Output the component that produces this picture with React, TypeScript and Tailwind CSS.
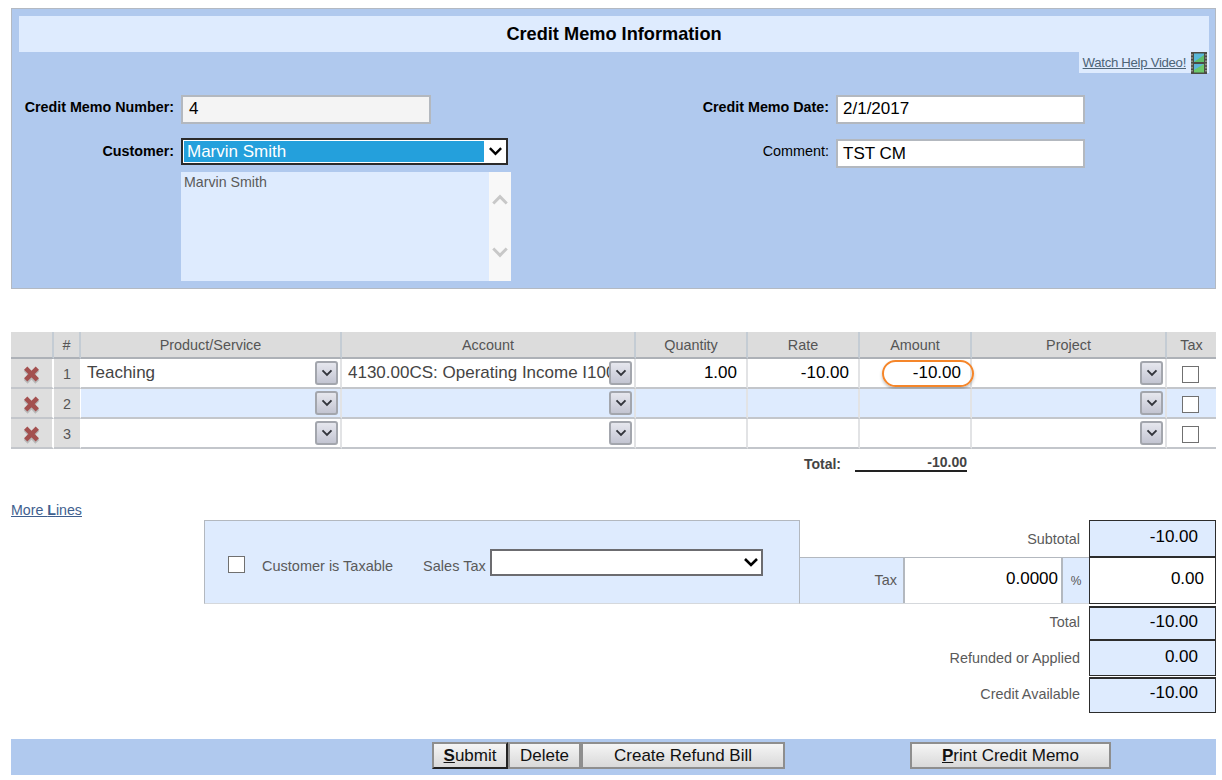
import React from "react";

const light = "bg-[#deebfe]";

function Chevron({ className = "" }: { className?: string }) {
  return (
    <svg viewBox="0 0 16 10" className={className} fill="none">
      <path d="M2 1.5 L8 7.5 L14 1.5" stroke="currentColor" strokeWidth="2.6" />
    </svg>
  );
}

function DropBtn() {
  return (
    <div className="flex h-[24px] w-[23px] items-center justify-center rounded-[3px] border-2 border-[#a3a6ad] bg-gradient-to-b from-[#e6e7ee] to-[#c3c5d2] text-[#33353c]">
      <Chevron className="h-[8px] w-[12px]" />
    </div>
  );
}

function CheckBox({ className = "" }: { className?: string }) {
  return <div className={"h-[17px] w-[17px] border border-[#707070] bg-white " + className} />;
}

function XIcon() {
  return (
    <svg viewBox="0 0 18 18" className="mt-[3px] h-[19px] w-[19px]">
      <path d="M3.5 3 L14.5 15 M14.5 3 L3.5 15" stroke="#8a8a8a" strokeOpacity="0.45" strokeWidth="5" transform="translate(0 1)" />
      <path d="M3.5 3 L14.5 14 M14.5 3 L3.5 14" stroke="#a3504f" strokeWidth="4.4" />
    </svg>
  );
}

function FilmIcon() {
  return (
    <svg viewBox="0 0 16 22" className="h-[22px] w-[16px]">
      <rect x="0" y="0" width="16" height="22" fill="#4c4c44" />
      <rect x="3" y="1.5" width="10" height="8.5" fill="#58b8d8" />
      <path d="M3 10 L13 3 V10 Z" fill="#5fbe6a" />
      <rect x="3" y="12" width="10" height="8.5" fill="#6cc86a" />
      <path d="M3 12 H13 L3 18 Z" fill="#5cb4d8" />
      <path d="M1 2 V20 M15 2 V20" stroke="#bdbdb0" strokeWidth="1.2" strokeDasharray="1.6 1.6" />
    </svg>
  );
}

function Field({ value, bg = "bg-white", className = "" }: { value: string; bg?: string; className?: string }) {
  return (
    <div className={"flex h-[29px] items-center border-2 border-[#b3b8bf] text-[17px] text-black " + bg + " " + className}>
      {value}
    </div>
  );
}

const Label = ({ children, className = "" }: { children: React.ReactNode; className?: string }) => (
  <div className={"text-right text-black " + className}>{children}</div>
);

const heads = ["", "#", "Product/Service", "Account", "Quantity", "Rate", "Amount", "Project", "Tax"];

function Row({ n, blue, product, account, qty, rate, amount }: { n: number; blue?: boolean; product?: string; account?: string; qty?: string; rate?: string; amount?: string }) {
  const bg = blue ? light : "bg-white";
  const cell = "h-[30px] border-b-2 border-b-[#c3c6cb] border-r-2 border-r-[#e2e3e5] " + bg;
  return (
    <>
      <div className="flex h-[30px] items-center justify-center border-b-2 border-r-2 border-b-[#c3c6cb] border-r-white bg-[#dedede]">
        <XIcon />
      </div>
      <div className="flex h-[30px] items-center justify-center border-b-2 border-r border-b-[#c3c6cb] border-r-white bg-[#dedede] pt-[3px] text-[14.4px] text-[#555]">
        {n}
      </div>
      <div className={cell + " flex items-center justify-between overflow-hidden pl-[6px] pr-[2px]"}>
        <span className="text-[17px] text-[#444]">{product}</span>
        <DropBtn />
      </div>
      <div className={cell + " relative flex items-center overflow-hidden pl-[6px]"}>
        <span className="whitespace-nowrap text-[17px] text-[#444]">{account}</span>
        <div className="absolute right-[2px] top-[2px]">
          <DropBtn />
        </div>
      </div>
      <div className={cell + " flex items-center justify-end pr-[9px] text-[17px] text-black"}>{qty}</div>
      <div className={cell + " flex items-center justify-end pr-[9px] text-[17px] text-black"}>{rate}</div>
      <div className={cell + " relative flex items-center justify-end pr-[9px] text-[17px] text-black"}>
        {amount}
        {amount && (
          <div className="absolute left-[22px] top-[1px] h-[27px] w-[92px] rounded-[14px] border-2 border-[#f5862a] shadow-[0_2px_3px_rgba(80,80,80,0.35)]" />
        )}
      </div>
      <div className={cell + " flex items-center justify-end pr-[2px]"}>
        <DropBtn />
      </div>
      <div className={"flex h-[30px] items-center justify-center border-b-2 border-b-[#c3c6cb] pr-[2px] pt-[2px] " + bg}>
        <CheckBox />
      </div>
    </>
  );
}

function TotalBox({ value, className = "" }: { value: string; className?: string }) {
  return (
    <div className={"flex w-[127px] items-start justify-end border border-[#2c2c2c] pr-[17px] text-[17px] text-black " + className}>
      {value}
    </div>
  );
}

function Btn({ children, className = "" }: { children: React.ReactNode; className?: string }) {
  return (
    <div className={"flex h-[27px] items-center justify-center border-2 border-[#8e8e8e] bg-gradient-to-b from-[#f5f5f5] to-[#d9d9d9] text-[17px] text-[#111] " + className}>
      {children}
    </div>
  );
}

export default function App() {
  return (
    <div className="h-[780px] w-[1222px] overflow-hidden bg-white pl-[11px] pt-[8px] font-['Liberation_Sans',Arial,sans-serif]">
      {/* Header panel */}
      <div className="h-[281px] w-[1205px] border border-[#b3b9c2] bg-[#b0c9ee] pl-[7px] pt-[7px]">
        <div className={"flex h-[36px] w-[1190px] items-center justify-center pt-[2px] text-[18.2px] font-bold text-black " + light}>
          Credit Memo Information
        </div>
        <div className="flex w-[1190px] justify-end">
          <div className={"flex h-[21px] w-[130px] items-center justify-end pr-[2px] " + light}>
            <span className="mr-[5px] text-[13.2px] tracking-[-0.3px] text-[#4d6476] underline">Watch Help Video!</span>
            <FilmIcon />
          </div>
        </div>
        <div className="mt-[22px] flex">
          <div className="w-[600px]">
            <div className="flex items-center gap-[7px]">
              <Label className="mb-[4px] w-[155px] text-[14.3px] font-bold">Credit Memo Number:</Label>
              <Field value="4" bg="bg-[#f4f4f4]" className="w-[250px] pb-[2px] pl-[6px]" />
            </div>
            <div className="mt-[14px] flex items-center gap-[7px]">
              <Label className="w-[155px] text-[14.3px] font-bold">Customer:</Label>
              <div className="flex h-[27px] w-[327px] items-center border-2 border-[#2b2b2b] bg-white p-[1px]">
                <div className="flex h-full w-[300px] items-center bg-[#24a0dc] pl-[3px] text-[17px] text-white">Marvin Smith</div>
                <Chevron className="ml-[4px] h-[11px] w-[15px] text-black" />
              </div>
            </div>
            <div className={"ml-[162px] mt-[7px] flex h-[109px] w-[330px] " + light}>
              <div className="flex-1 pl-[3px] text-[14.2px] text-[#5a5a5a]">Marvin Smith</div>
              <div className="flex w-[22px] flex-col items-center bg-[#f8f8f8] pt-[20px] text-[#c8c8c8]">
                <Chevron className="h-[15px] w-[18px] rotate-180" />
                <Chevron className="mt-[38px] h-[15px] w-[18px]" />
              </div>
            </div>
          </div>
          <div>
            <div className="flex items-center gap-[7px]">
              <Label className="mb-[4px] w-[210px] text-[14.3px] font-bold">Credit Memo Date:</Label>
              <Field value="2/1/2017" className="w-[249px] pb-[1px] pl-[5px]" />
            </div>
            <div className="mt-[15px] flex items-center gap-[7px]">
              <Label className="mb-[4px] w-[210px] text-[14.4px]">Comment:</Label>
              <Field value="TST CM" className="w-[249px] pl-[5px]" />
            </div>
          </div>
        </div>
      </div>

      {/* Lines table */}
      <div className="mt-[43px] grid w-[1205px] grid-cols-[43px_27px_261px_294px_112px_112px_112px_195px_49px]">
        {heads.map((h, i) => (
          <div
            key={i}
            className={
              "flex h-[27px] items-center justify-center border-b-2 border-b-[#adb1b7] bg-[#dcdcdc] pt-[3px] text-[14.4px] text-[#555] " +
              (i < 8 ? "border-r-2 border-r-[#c4ccd4]" : "")
            }
          >
            {h}
          </div>
        ))}
        <Row n={1} product="Teaching" account="4130.00CS: Operating Income I100" qty="1.00" rate="-10.00" amount="-10.00" />
        <Row n={2} blue />
        <Row n={3} />
      </div>

      {/* Line total */}
      <div className="mt-[6px] flex h-[17px] w-[956px] items-center justify-end text-[14px] font-bold text-[#444]">
        <span className="mt-[2px]">Total:</span>
        <div className="ml-[14px] h-[17px] w-[112px] border-b-2 border-b-[#222] text-right leading-[15px]">-10.00</div>
      </div>

      {/* More lines */}
      <div className="mt-[30px] text-[14.2px] leading-[16px] text-[#3f5f8f] underline">
        More <b>L</b>ines
      </div>

      {/* Summary */}
      <div className="mt-[2px] flex">
        <div className="ml-[193px] w-[885px] shrink-0">
          <div className="flex">
            <div className={"flex h-[84px] w-[596px] items-start border border-x-[#b3b8bf] border-t-[#b3b8bf] border-b-[#d5d8dc] pl-[23px] " + light}>
              <CheckBox className="mt-[35px]" />
              <span className="ml-[17px] mt-[37px] text-[14.5px] leading-[17px] text-[#5a5a5a]">Customer is Taxable</span>
              <span className="ml-[30px] mt-[37px] text-[14.5px] leading-[17px] text-[#5a5a5a]">Sales Tax</span>
              <div className="ml-[4px] mt-[28px] flex h-[27px] w-[273px] items-center justify-end border-2 border-[#6c6c70] bg-white pr-[2px]">
                <Chevron className="h-[11px] w-[16px] text-black" />
              </div>
            </div>
            <div className="flex flex-1 flex-col">
              <div className="flex h-[37px] items-center justify-end pr-[9px] pt-[2px] text-[14.4px] text-[#5a5a5a]">Subtotal</div>
              <div className="flex h-[47px] border-y border-t-[#b3b8bf] border-b-[#d5d8dc]">
                <div className={"flex w-[103px] items-center justify-end pr-[6px] text-[14.4px] text-[#5a5a5a] " + light}>Tax</div>
                <div className="flex w-[160px] items-center justify-end border-x-2 border-x-[#b3b8bf] bg-white pb-[3px] pr-[3px] text-[17px] text-black">0.0000</div>
                <div className={"flex flex-1 items-center justify-center text-[12px] text-[#555] " + light}>%</div>
              </div>
            </div>
          </div>
          <div className="flex h-[36px] items-center justify-end pr-[9px] pt-[2px] text-[14.4px] text-[#5a5a5a]">Total</div>
          <div className="flex h-[36px] items-center justify-end pr-[9px] pt-[2px] text-[14.4px] text-[#5a5a5a]">Refunded or Applied</div>
          <div className="flex h-[35px] items-center justify-end pr-[9px] pt-[3px] text-[14.4px] text-[#5a5a5a]">Credit Available</div>
        </div>
        <div className="flex flex-col">
          <TotalBox value="-10.00" className={"h-[37px] pt-[3px] " + light} />
          <div className="flex h-[47px] w-[127px] items-center justify-end border border-[#2c2c2c] bg-white pb-[4px] pr-[11px] text-[17px] text-black">0.00</div>
          <TotalBox value="-10.00" className={"mt-[2px] h-[34px] border-t-2 pt-[1px] " + light} />
          <TotalBox value="0.00" className={"h-[36px] pt-[3px] " + light} />
          <TotalBox value="-10.00" className={"mt-[1px] h-[36px] border-t-2 pt-[1px] " + light} />
        </div>
      </div>

      {/* Footer */}
      <div className="mt-[26px] flex h-[36px] w-[1205px] items-start bg-[#b0c9ee] pl-[421px] pt-[3px]">
        <Btn className="w-[76px] border-[#2a2a2a] border-r-[#222] border-b-[#222]">
          <span><b className="font-bold underline">S</b>ubmit</span>
        </Btn>
        <Btn className="w-[73px]">Delete</Btn>
        <Btn className="w-[204px]">Create Refund Bill</Btn>
        <Btn className="ml-[125px] w-[201px]">
          <span><b className="font-bold underline">P</b>rint Credit Memo</span>
        </Btn>
      </div>
    </div>
  );
}
